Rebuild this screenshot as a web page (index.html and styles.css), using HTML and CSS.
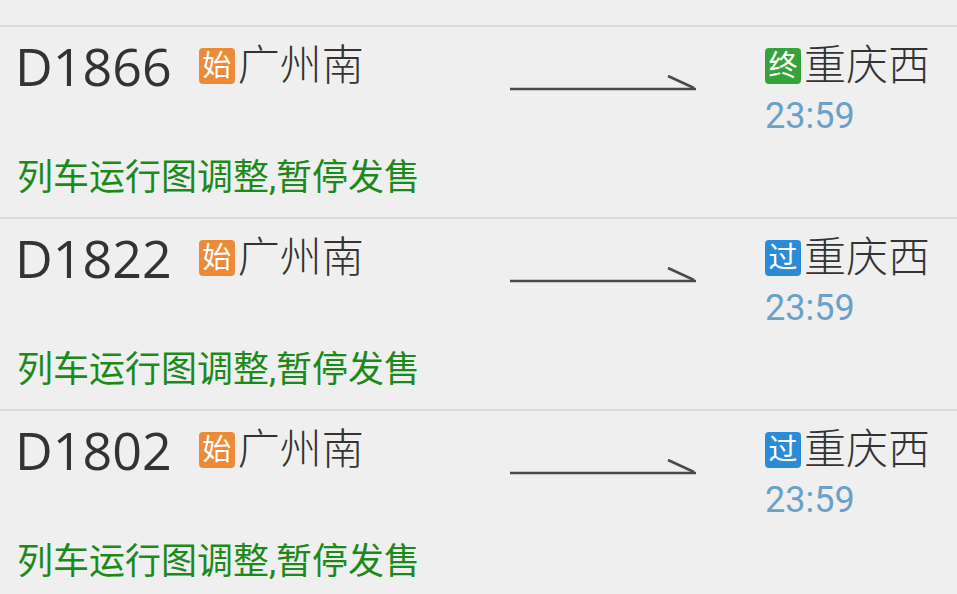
FILE: index.html
```html
<!DOCTYPE html>
<html lang="zh-CN">

<head>
    <meta charset="UTF-8">
    <meta name="viewport" content="width=device-width, initial-scale=1.0">
    <title>车次列表</title>
    <link rel="stylesheet" href="styles.css">
</head>

<body>
    <div class="list">
        <div class="row">
            <div class="top">
                <div class="left">
                    <span class="train">D1866</span>
                    <span class="badge start">始</span>
                    <span class="station">广州南</span>
                </div>
                <svg class="arrow" width="186" height="20" viewBox="0 0 186 20">
                    <line x1="0" y1="17" x2="186" y2="17" />
                    <line x1="158" y1="4" x2="184" y2="16" />
                </svg>
                <div class="right">
                    <div class="dest">
                        <span class="badge end">终</span>
                        <span class="station">重庆西</span>
                    </div>
                    <div class="time">23:59</div>
                </div>
            </div>
            <div class="msg">列车运行图调整,暂停发售</div>
        </div>

        <div class="row">
            <div class="top">
                <div class="left">
                    <span class="train">D1822</span>
                    <span class="badge start">始</span>
                    <span class="station">广州南</span>
                </div>
                <svg class="arrow" width="186" height="20" viewBox="0 0 186 20">
                    <line x1="0" y1="17" x2="186" y2="17" />
                    <line x1="158" y1="4" x2="184" y2="16" />
                </svg>
                <div class="right">
                    <div class="dest">
                        <span class="badge pass">过</span>
                        <span class="station">重庆西</span>
                    </div>
                    <div class="time">23:59</div>
                </div>
            </div>
            <div class="msg">列车运行图调整,暂停发售</div>
        </div>

        <div class="row">
            <div class="top">
                <div class="left">
                    <span class="train">D1802</span>
                    <span class="badge start">始</span>
                    <span class="station">广州南</span>
                </div>
                <svg class="arrow" width="186" height="20" viewBox="0 0 186 20">
                    <line x1="0" y1="17" x2="186" y2="17" />
                    <line x1="158" y1="4" x2="184" y2="16" />
                </svg>
                <div class="right">
                    <div class="dest">
                        <span class="badge pass">过</span>
                        <span class="station">重庆西</span>
                    </div>
                    <div class="time">23:59</div>
                </div>
            </div>
            <div class="msg">列车运行图调整,暂停发售</div>
        </div>
    </div>
</body>

</html>
```

FILE: styles.css
```css
/* Page */

body {
    margin: 0;
    background: #efefef;
    font-family: Roboto, "Noto Sans CJK SC", sans-serif;
    color: #333333;
}

.list {
    padding-top: 25px;
}
/* Rows */

.row {
    box-sizing: border-box;
    height: 192px;
    border-top: 2px solid #d9d9d9;
    padding: 9px 0 0 17px;
}

.top {
    display: flex;
    align-items: flex-start;
}

.left {
    width: 493px;
    height: 60px;
    display: flex;
    align-items: center;
}

.train {
    font-family: "Open Sans", Roboto, sans-serif;
    font-size: 52px;
    line-height: 60px;
    margin-right: 27px;
    margin-left: -2px;
}

.station {
    font-size: 42px;
    font-weight: 300;
    line-height: 60px;
    margin-left: 3px;
}
/* Badges */

.badge {
    width: 36px;
    height: 36px;
    border-radius: 4px;
    color: white;
    font-size: 29px;
    line-height: 36px;
    text-align: center;
}

.start {
    background: #ec8a37;
}

.end {
    background: #35a33a;
}

.pass {
    background: #2a8bd6;
}
/* Arrow */

.arrow {
    margin-top: 36px;
}

.arrow line {
    stroke: #4a4a4a;
    stroke-width: 2.5;
}

.right {
    margin-left: 69px;
}

.dest {
    height: 60px;
    display: flex;
    align-items: center;
}

.time {
    font-size: 36px;
    line-height: 40px;
    color: #6ca1c6;
}

.msg {
    margin-top: 22px;
    font-size: 36px;
    line-height: 40px;
    color: #1b8a1b;
}
```
